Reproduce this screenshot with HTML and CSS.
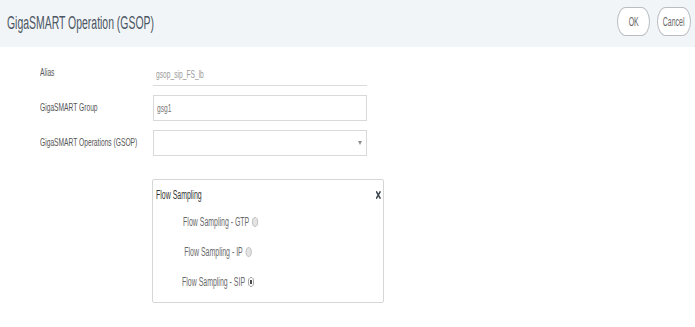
FILE: index.html
```html
<!DOCTYPE html>
<html lang="en">
<head>
  <meta charset="UTF-8" />
  <title>GigaSMART Operation (GSOP)</title>
  <link rel="stylesheet" href="styles.css">
</head>
<body>

  <!-- Barra de topo -->
  <div class="topo">
    <h1 class="titulo"><span class="sq">GigaSMART Operation (GSOP)</span></h1>
    <div class="acoes">
      <button class="pill"><span class="sq">OK</span></button>
      <button class="pill"><span class="sq">Cancel</span></button>
    </div>
  </div>

  <!-- Formulário -->
  <div class="form">
    <div class="linha">
      <label class="rotulo"><span class="sq">Alias</span></label>
      <div class="campo sublinhado"><span class="sq">gsop_sip_FS_lb</span></div>
    </div>
    <div class="linha">
      <label class="rotulo"><span class="sq">GigaSMART Group</span></label>
      <div class="campo caixa"><span class="sq">gsg1</span></div>
    </div>
    <div class="linha">
      <label class="rotulo"><span class="sq">GigaSMART Operations (GSOP)</span></label>
      <div class="campo caixa select"><span class="seta"></span></div>
    </div>

    <div class="painel">
      <div class="painel-topo">
        <span class="sq">Flow Sampling</span>
        <svg class="fechar" width="4.6" height="8" viewBox="0 0 8 8" preserveAspectRatio="none">
          <path d="M1 1 L7 7 M7 1 L1 7" stroke="#3d4650" stroke-width="2.2" stroke-linecap="square"/>
        </svg>
      </div>
      <ul class="opcoes">
        <li><span class="sq">Flow Sampling - GTP <span class="radio"></span></span></li>
        <li><span class="sq">Flow Sampling - IP <span class="radio"></span></span></li>
        <li><span class="sq">Flow Sampling - SIP <span class="radio marcado"></span></span></li>
      </ul>
    </div>
  </div>

</body>
</html>
```

FILE: styles.css
```css
body {
  margin: 0;
  background: #fff;
  font-family: 'Liberation Sans', Arial, sans-serif;
}

/* o texto da captura está comprimido na horizontal */
.sq {
  display: inline-block;
  white-space: nowrap;
  transform: scaleX(0.58);
  transform-origin: left center;
}

.topo {
  height: 47px;
  background: #f2f5f8;
  display: flex;
  justify-content: space-between;
  align-items: center;
  padding: 0 4px 0 7px;
}

.titulo {
  margin: 0;
  width: 160px;
  font-size: 18px;
  font-weight: normal;
  color: #4b5663;
}

.acoes {
  display: flex;
  gap: 7px;
  align-self: flex-start;
  margin-top: 7px;
}

.pill {
  height: 29px;
  width: 33px;
  padding: 0;
  background: #fff;
  border: 1px solid #b9bdc2;
  border-radius: 9px / 15px;
  font-family: inherit;
  font-size: 12px;
  color: #666;
  display: flex;
  justify-content: center;
  align-items: center;
}

.pill .sq {
  transform-origin: center;
}

.pill + .pill {
  width: 34px;
}

.form {
  padding: 13px 0 0 40px;
}

.linha {
  display: flex;
  align-items: center;
  margin-bottom: 9px;
}

.rotulo {
  width: 113px;
  font-size: 11.5px;
  color: #555;
  margin-top: -2px;
}

.campo {
  width: 214px;
  height: 26px;
  box-sizing: border-box;
  font-size: 11.5px;
  display: flex;
  align-items: center;
  padding: 0 3px;
}

.sublinhado {
  border-bottom: 1px solid #dcdcdc;
  color: #9a9a9a;
  padding-top: 2px;
}

.caixa {
  border: 1px solid #d9d9d9;
  color: #777;
}

.select {
  justify-content: flex-end;
  padding-right: 4px;
}

.seta {
  border-left: 2px solid transparent;
  border-right: 2px solid transparent;
  border-top: 4px solid #8a8f95;
}

.painel {
  margin: 23px 0 0 112px;
  width: 232px;
  height: 124px;
  box-sizing: border-box;
  border: 1px solid #d6d6d6;
  border-radius: 2px;
  padding: 6px 2px 0 3px;
}

.painel-topo {
  display: flex;
  justify-content: space-between;
  align-items: center;
  height: 18px;
  font-size: 12px;
  color: #333;
}

.opcoes {
  list-style: none;
  margin: 3px 0 0;
  padding: 0;
  width: 124px;
  text-align: center;
}

.opcoes li {
  line-height: 30px;
  height: 30px;
  font-size: 12px;
  color: #6a6a6a;
}

.opcoes .sq {
  transform-origin: center;
}

.radio {
  display: inline-block;
  width: 10px;
  height: 10px;
  box-sizing: border-box;
  border-radius: 50%;
  border: 1px solid #b5b5b5;
  background: #e4e4e4;
  vertical-align: -1px;
  margin-left: 2px;
}

.radio.marcado {
  background: radial-gradient(circle, #4a4a4a 0 2px, #fff 2.5px);
  border-color: #8a8a8a;
}
```
